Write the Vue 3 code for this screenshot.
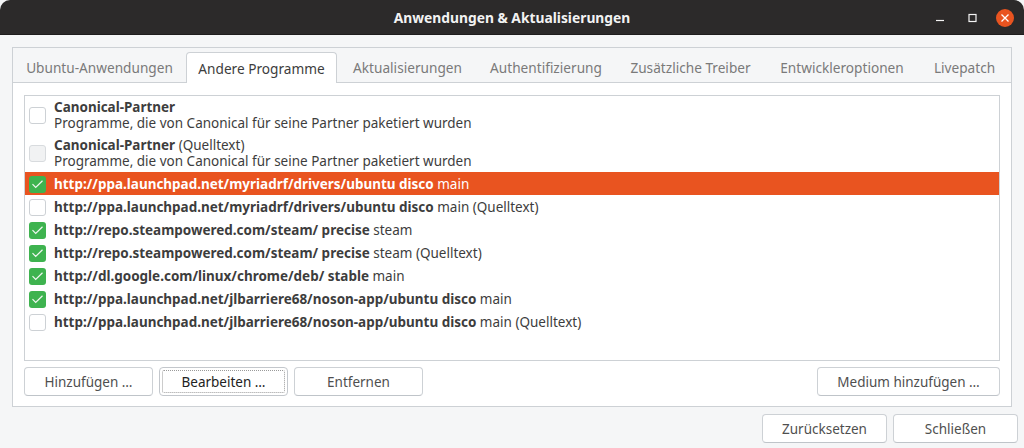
<script setup>
const tabs = [
  { label: 'Ubuntu-Anwendungen', width: 165 },
  { label: 'Andere Programme', width: 151, active: true },
  { label: 'Aktualisierungen', width: 133 },
  { label: 'Authentifizierung', width: 136 },
  { label: 'Zusätzliche Treiber', width: 145 },
  { label: 'Entwickleroptionen', width: 150 },
  { label: 'Livepatch', width: 87 },
]

const sources = [
  { title: 'Canonical-Partner', desc: 'Programme, die von Canonical für seine Partner paketiert wurden', state: 'off' },
  { title: 'Canonical-Partner', extra: ' (Quelltext)', desc: 'Programme, die von Canonical für seine Partner paketiert wurden', state: 'dim' },
  { title: 'http://ppa.launchpad.net/myriadrf/drivers/ubuntu disco', extra: ' main', state: 'on', selected: true },
  { title: 'http://ppa.launchpad.net/myriadrf/drivers/ubuntu disco', extra: ' main (Quelltext)', state: 'off' },
  { title: 'http://repo.steampowered.com/steam/ precise', extra: ' steam', state: 'on' },
  { title: 'http://repo.steampowered.com/steam/ precise', extra: ' steam (Quelltext)', state: 'on' },
  { title: 'http://dl.google.com/linux/chrome/deb/ stable', extra: ' main', state: 'on' },
  { title: 'http://ppa.launchpad.net/jlbarriere68/noson-app/ubuntu disco', extra: ' main', state: 'on' },
  { title: 'http://ppa.launchpad.net/jlbarriere68/noson-app/ubuntu disco', extra: ' main (Quelltext)', state: 'off' },
]
</script>

<template>
  <div class="window">
    <header class="titlebar">
      <span class="title">Anwendungen &amp; Aktualisierungen</span>
      <div class="controls">
        <svg width="10" height="10" viewBox="0 0 10 10"><path d="M0 7.5h8" stroke="#f4f4f4" stroke-width="1.2" fill="none" /></svg>
        <svg width="10" height="10" viewBox="0 0 10 10"><rect x="1" y="1.5" width="7" height="7" stroke="#f4f4f4" stroke-width="1.2" fill="none" /></svg>
        <span class="close">
          <svg width="10" height="10" viewBox="0 0 10 10"><path d="M1.5 1.5l7 7M8.5 1.5l-7 7" stroke="#fff" stroke-width="1.3" fill="none" /></svg>
        </span>
      </div>
    </header>

    <main class="content">
      <section class="notebook">
        <nav class="tabs">
          <div
            v-for="tab in tabs"
            :key="tab.label"
            class="tab"
            :class="{ active: tab.active }"
            :style="{ width: tab.width + 'px' }"
          >{{ tab.label }}</div>
        </nav>

        <div class="page">
          <ul class="list">
            <li
              v-for="(item, i) in sources"
              :key="i"
              class="row"
              :class="{ selected: item.selected, tall: item.desc }"
            >
              <span class="check" :class="item.state">
                <svg v-if="item.state === 'on'" width="13" height="9" viewBox="0 0 13 9">
                  <path d="M1.5 4.2l3.2 3.2 6.8-6.6" stroke="#f2f7f2" stroke-width="1.2" fill="none" />
                </svg>
              </span>
              <div class="text">
                <div><b>{{ item.title }}</b>{{ item.extra }}</div>
                <div v-if="item.desc">{{ item.desc }}</div>
              </div>
            </li>
          </ul>

          <div class="actions">
            <button class="btn w-129">Hinzufügen …</button>
            <button class="btn w-129 focused"><span class="focus-ring">Bearbeiten …</span></button>
            <button class="btn w-129">Entfernen</button>
            <button class="btn medium">Medium hinzufügen …</button>
          </div>
        </div>
      </section>

      <footer class="footer">
        <button class="btn w-125">Zurücksetzen</button>
        <button class="btn w-125">Schließen</button>
      </footer>
    </main>
  </div>
</template>

<style>
html, body {
  margin: 0;
  background: #f5f6f7;
}
</style>

<style scoped>
.window {
  width: 1024px;
  height: 448px;
  display: flex;
  flex-direction: column;
  overflow: hidden;
  font-family: "Noto Sans", "Open Sans", sans-serif;
  font-size: 13.5px;
  color: #3d3d3d;
  background: #f5f6f7;
}

.titlebar {
  height: 35px;
  flex: none;
  position: relative;
  display: flex;
  align-items: center;
  justify-content: center;
  background: #2c2a2a;
  border-radius: 10px 10px 0 0;
  border-bottom: 1px solid #1f1d1d;
  box-sizing: border-box;
}

.title {
  color: #f2f2f2;
  font-weight: 700;
  font-size: 13.8px;
}

.controls {
  position: absolute;
  right: 10px;
  top: 9px;
  display: flex;
  align-items: center;
  gap: 22px;
}

.close {
  width: 18px;
  height: 18px;
  margin-left: -4px;
  border-radius: 50%;
  background: #e95420;
  display: flex;
  align-items: center;
  justify-content: center;
}

.content {
  flex: 1;
  display: flex;
  flex-direction: column;
  padding: 12px 6px 6px 12px;
}

.notebook {
  width: 1000px;
  height: 360px;
  box-sizing: border-box;
  border: 1px solid #cdd1d5;
  background: #fff;
  display: flex;
  flex-direction: column;
}

.tabs {
  height: 35px;
  flex: none;
  box-sizing: border-box;
  display: flex;
  align-items: flex-end;
  gap: 4px;
  padding-left: 4px;
  background: #f5f6f7;
  border-bottom: 1px solid #cdd1d5;
  font-size: 13.65px;
}

.tab {
  height: 30px;
  flex: none;
  box-sizing: border-box;
  display: flex;
  align-items: center;
  justify-content: center;
  color: #7a7a7a;
  white-space: nowrap;
}

.tab.active {
  height: 31px;
  margin-bottom: -1px;
  background: #fff;
  color: #3d3d3d;
  border: 1px solid #cdd1d5;
  border-bottom: none;
  border-radius: 4px 4px 0 0;
}

.page {
  flex: 1;
  display: flex;
  flex-direction: column;
  padding: 12px 11px 0 11px;
}

.list {
  height: 266px;
  margin: 0;
  padding: 0;
  list-style: none;
  box-sizing: border-box;
  border: 1px solid #cdd1d5;
  background: #fff;
}

.row {
  height: 23px;
  display: flex;
  align-items: center;
  gap: 8px;
  padding-left: 4px;
  line-height: 16px;
  white-space: nowrap;
}

.row.tall {
  height: 38px;
}

.row.selected {
  background: #e95420;
  color: #fff;
}

.check {
  width: 17px;
  height: 17px;
  margin-top: 1px;
  flex: none;
  box-sizing: border-box;
  border-radius: 3px;
  display: flex;
  align-items: center;
  justify-content: center;
}

.check.off {
  background: #fff;
  border: 1px solid #cdd1d5;
}

.check.dim {
  background: #f1f2f3;
  border: 1px solid #d8dbde;
}

.check.on {
  background: #3eb34f;
}

.text {
  font-size: 13.5px;
}

.text b {
  font-weight: 700;
  font-size: 13.47px;
}

.actions {
  margin-top: 6px;
  display: flex;
  gap: 6px;
}

.btn {
  height: 29px;
  box-sizing: border-box;
  padding: 0;
  font: inherit;
  color: #4f4f4f;
  background: #fff;
  border: 1px solid #cdd1d5;
  border-bottom-color: #bfc4c9;
  border-radius: 4px;
}

.w-129 {
  width: 129px;
}

.w-125 {
  width: 125px;
}

.btn.focused {
  padding: 2px;
  color: #222;
  border-color: #c3c7cc;
}

.focus-ring {
  display: flex;
  align-items: center;
  justify-content: center;
  height: 100%;
  border: 1px dotted #9a9a9a;
  border-radius: 2px;
  box-sizing: border-box;
}

.medium {
  width: 183px;
  margin-left: auto;
}

.footer {
  margin-top: 7px;
  display: flex;
  justify-content: flex-end;
  gap: 6px;
}
</style>
